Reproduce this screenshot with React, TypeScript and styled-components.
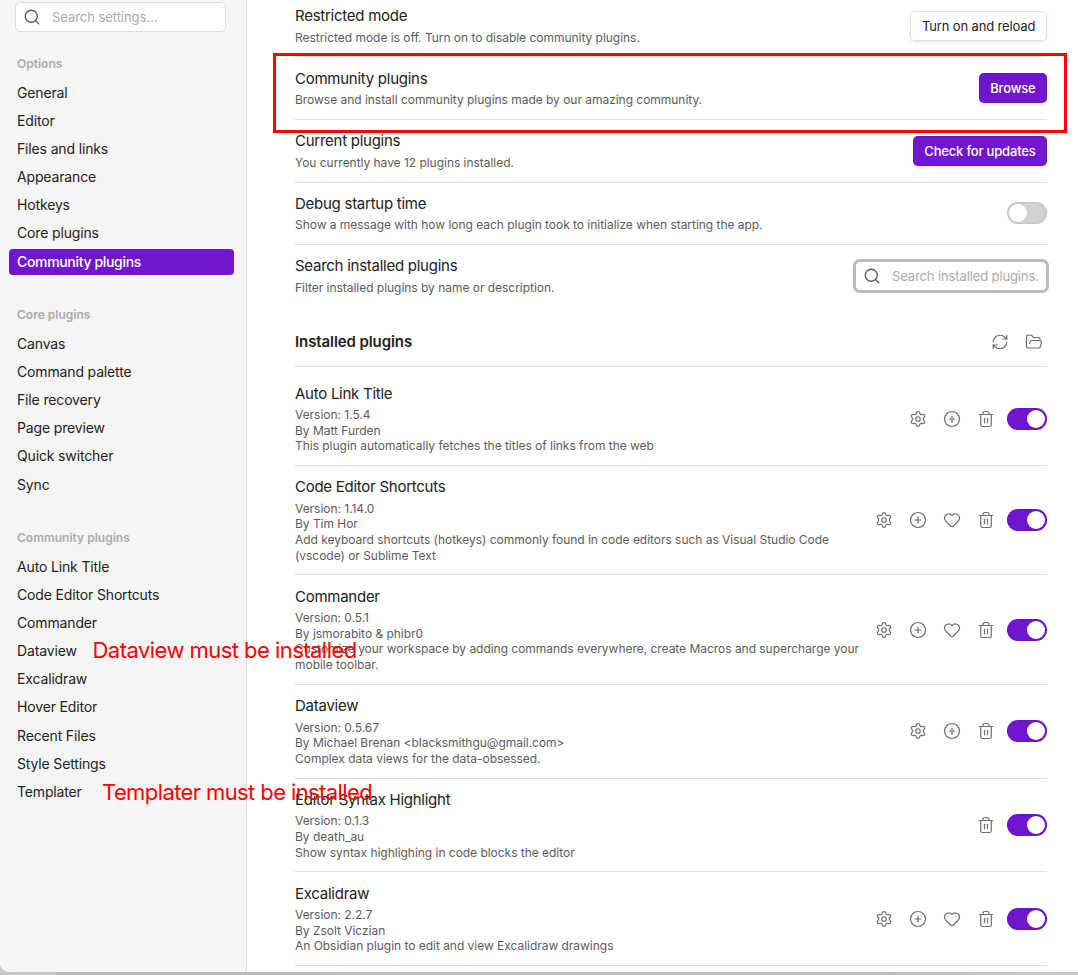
import React from "react";
import styled, { createGlobalStyle, css } from "styled-components";
import {
  CirclePlus,
  FolderOpen,
  Heart,
  RefreshCw,
  Search,
  Settings,
  Trash2,
} from "lucide-react";

const accent = "#7016cf";
const line = "#dedede";

const GlobalStyle = createGlobalStyle`
  *, *::before, *::after { box-sizing: border-box; }
  html, body { margin: 0; padding: 0; }
  body {
    overflow: hidden;
    font-family: Inter, "Liberation Sans", sans-serif;
    color: #222;
    background: #bababa;
  }
`;

const Page = styled.div`
  position: relative;
  width: 1078px;
  height: 975px;
  overflow: hidden;
  background: linear-gradient(to right, #c9c9c9 0, #c6c6c6 55px, #bababa 56px, #bdbdbd 860px, #c8c8c8 1078px);
`;

const Modal = styled.div`
  display: flex;
  height: 972px;
  background: #fff;
  border-bottom-left-radius: 9px;
  overflow: hidden;
`;

const Sidebar = styled.nav`
  flex: none;
  width: 247px;
  padding: 2px 12px 0 9px;
  background: #f5f5f5;
  border-right: 1px solid ${line};
`;

const SearchBox = styled.div<{ $focused?: boolean }>`
  display: flex;
  align-items: center;
  height: 30px;
  gap: 11px;
  padding-left: 7px;
  overflow: hidden;
  white-space: nowrap;
  font-size: 13px;
  color: #ababab;
  background: #fff;
  border: 1px solid ${line};
  border-radius: 5px;

  svg { flex: none; color: #5c5c5c; }

  ${(p) =>
    p.$focused
      ? css`
          width: 192px;
          letter-spacing: -0.12px;
          border-color: #bbb;
          box-shadow: 0 0 0 2px #bbb;
        `
      : css`
          width: 211px;
          margin-left: 6px;
          letter-spacing: -0.05px;
        `}
`;

const NavGroup = styled.section`
  margin-bottom: 31.8px;
`;

const NavHeader = styled.h2`
  margin: 0;
  padding: 0 8px 8px;
  font-size: 12px;
  line-height: 16px;
  font-weight: 600;
  color: #ababab;
`;

const NavList = styled.div`
  display: flex;
  flex-direction: column;
  gap: 2px;
`;

const NavItem = styled.div<{ $active?: boolean }>`
  height: 26.2px;
  padding: 4px 8px;
  border-radius: 4px;
  font-size: 14px;
  line-height: 18.2px;
  letter-spacing: -0.15px;
  ${(p) =>
    p.$active &&
    css`
      color: #fff;
      background: ${accent};
      font-weight: 500;
      letter-spacing: -0.33px;
    `}
`;

const NavTop = styled.div`
  height: 53.5px;
`;

const Content = styled.main`
  flex: 1;
  padding: 0 31px 0 48px;
  margin-top: -6.2px;
`;

const Row = styled.div`
  display: flex;
  align-items: center;
  padding: 11.25px 0;
  border-top: 1px solid ${line};

  &:first-child { border-top-color: transparent; }
`;

const Info = styled.div`
  flex: 1;
  margin-right: 8px;
`;

const Name = styled.div`
  font-size: 15px;
  line-height: 19.5px;
  letter-spacing: -0.26px;
`;

const Description = styled.div`
  padding-top: 4px;
  font-size: 12px;
  line-height: 15.6px;
  letter-spacing: -0.03px;
  color: #5c5c5c;
`;

const Controls = styled.div`
  flex: none;
  display: flex;
  align-items: center;
  gap: 8px;
`;

const Button = styled.button<{ $primary?: boolean }>`
  height: 30px;
  padding: 0 11.8px;
  border: 0;
  border-radius: 5px;
  font: 400 13px Inter, sans-serif;
  letter-spacing: -0.15px;
  color: #222;
  background: #fff;
  box-shadow: inset 0 0 0 1px #e2e2e2, 0 2px 3px rgba(0, 0, 0, 0.07);
  ${(p) =>
    p.$primary &&
    css`
      padding: 0 11.5px;
      font-weight: 500;
      letter-spacing: -0.19px;
      color: #fff;
      background: ${accent};
      box-shadow: inset 0 0 0 1px rgba(0, 0, 0, 0.09), 0 2px 3px rgba(0, 0, 0, 0.1);
    `}
`;

const Toggle = styled.div<{ $on?: boolean }>`
  display: flex;
  align-items: center;
  justify-content: ${(p) => (p.$on ? "flex-end" : "flex-start")};
  width: 40px;
  height: 22px;
  padding: 0 2px;
  border-radius: 11px;
  background: ${(p) => (p.$on ? accent : "#d2d2d2")};
  box-shadow: inset 0 0 3px rgba(0, 0, 0, 0.16);

  &::after {
    content: "";
    width: 18px;
    height: 18px;
    border-radius: 50%;
    background: #fff;
  }
`;

const IconButton = styled.span`
  display: flex;
  padding: 4px;
  color: #707070;
`;

const HeadingRow = styled.div`
  display: flex;
  align-items: center;
  justify-content: space-between;
  height: 60.2px;
  padding-top: 11px;
  border-bottom: 1px solid ${line};
  margin-bottom: 4.35px;
`;

const Heading = styled.h3`
  margin: 0;
  font-size: 15px;
  line-height: 20px;
  font-weight: 600;
  letter-spacing: -0.09px;
`;

const PluginList = styled.div``;

const Highlight = styled.div`
  position: absolute;
  left: 273px;
  top: 53px;
  width: 794px;
  height: 80px;
  border: 3px solid #ff0000;
`;

const Note = styled.div<{ $x: number; $y: number; $spacing: number }>`
  position: absolute;
  left: ${(p) => p.$x}px;
  top: ${(p) => p.$y}px;
  font-size: 22px;
  line-height: 28px;
  letter-spacing: ${(p) => p.$spacing}px;
  white-space: nowrap;
  color: #ff0000;
`;

type ActionName = "settings" | "hotkeys" | "donate" | "remove";

const icons = {
  settings: Settings,
  hotkeys: CirclePlus,
  donate: Heart,
  remove: Trash2,
  refresh: RefreshCw,
  folder: FolderOpen,
};

const Action = ({ name }: { name: keyof typeof icons }) => {
  const Icon = icons[name];
  return (
    <IconButton>
      <Icon size={18} strokeWidth={1.65} />
    </IconButton>
  );
};

interface Plugin {
  name: string;
  version: string;
  author: string;
  about: string;
  actions: ActionName[];
}

const basic: ActionName[] = ["settings", "hotkeys", "remove"];
const full: ActionName[] = ["settings", "hotkeys", "donate", "remove"];

const plugins: Plugin[] = [
  { name: "Auto Link Title", version: "1.5.4", author: "Matt Furden", about: "This plugin automatically fetches the titles of links from the web", actions: basic },
  { name: "Code Editor Shortcuts", version: "1.14.0", author: "Tim Hor", about: "Add keyboard shortcuts (hotkeys) commonly found in code editors such as Visual Studio Code (vscode) or Sublime Text", actions: full },
  { name: "Commander", version: "0.5.1", author: "jsmorabito & phibr0", about: "Customize your workspace by adding commands everywhere, create Macros and supercharge your mobile toolbar.", actions: full },
  { name: "Dataview", version: "0.5.67", author: "Michael Brenan <blacksmithgu@gmail.com>", about: "Complex data views for the data-obsessed.", actions: basic },
  { name: "Editor Syntax Highlight", version: "0.1.3", author: "death_au", about: "Show syntax highlighing in code blocks the editor", actions: ["remove"] },
  { name: "Excalidraw", version: "2.2.7", author: "Zsolt Viczian", about: "An Obsidian plugin to edit and view Excalidraw drawings", actions: full },
];

const groups = [
  { title: "Options", items: ["General", "Editor", "Files and links", "Appearance", "Hotkeys", "Core plugins", "Community plugins"] },
  { title: "Core plugins", items: ["Canvas", "Command palette", "File recovery", "Page preview", "Quick switcher", "Sync"] },
  { title: "Community plugins", items: ["Auto Link Title", "Code Editor Shortcuts", "Commander", "Dataview", "Excalidraw", "Hover Editor", "Recent Files", "Style Settings", "Templater"] },
];

const Setting = ({ name, about, children }: { name: string; about: string; children: React.ReactNode }) => (
  <Row>
    <Info>
      <Name>{name}</Name>
      <Description>{about}</Description>
    </Info>
    <Controls>{children}</Controls>
  </Row>
);

export default function App() {
  return (
    <Page>
      <GlobalStyle />
      <Modal>
        <Sidebar>
          <NavTop>
            <SearchBox>
              <Search size={18} strokeWidth={1.75} />
              Search settings...
            </SearchBox>
          </NavTop>
          {groups.map((group) => (
            <NavGroup key={group.title}>
              <NavHeader>{group.title}</NavHeader>
              <NavList>
                {group.items.map((item) => (
                  <NavItem key={item} $active={item === "Community plugins"}>
                    {item}
                  </NavItem>
                ))}
              </NavList>
            </NavGroup>
          ))}
        </Sidebar>
        <Content>
          <Setting name="Restricted mode" about="Restricted mode is off. Turn on to disable community plugins.">
            <Button>Turn on and reload</Button>
          </Setting>
          <Setting name="Community plugins" about="Browse and install community plugins made by our amazing community.">
            <Button $primary>Browse</Button>
          </Setting>
          <Setting name="Current plugins" about="You currently have 12 plugins installed.">
            <Button $primary>Check for updates</Button>
          </Setting>
          <Setting name="Debug startup time" about="Show a message with how long each plugin took to initialize when starting the app.">
            <Toggle />
          </Setting>
          <Setting name="Search installed plugins" about="Filter installed plugins by name or description.">
            <SearchBox $focused>
              <Search size={18} strokeWidth={1.75} />
              Search installed plugins.
            </SearchBox>
          </Setting>
          <HeadingRow>
            <Heading>Installed plugins</Heading>
            <Controls>
              <Action name="refresh" />
              <Action name="folder" />
            </Controls>
          </HeadingRow>
          <PluginList>
            {plugins.map((plugin) => (
              <Row key={plugin.name}>
                <Info>
                  <Name>{plugin.name}</Name>
                  <Description>
                    <div>Version: {plugin.version}</div>
                    <div>By {plugin.author}</div>
                    <div>{plugin.about}</div>
                  </Description>
                </Info>
                <Controls>
                  {plugin.actions.map((action) => (
                    <Action key={action} name={action} />
                  ))}
                  <Toggle $on />
                </Controls>
              </Row>
            ))}
            <Row />
          </PluginList>
        </Content>
      </Modal>
      <Highlight />
      <Note $x={92.5} $y={636} $spacing={-0.54}>Dataview must be installed</Note>
      <Note $x={102} $y={778} $spacing={-0.6}>Templater must be installed</Note>
    </Page>
  );
}
